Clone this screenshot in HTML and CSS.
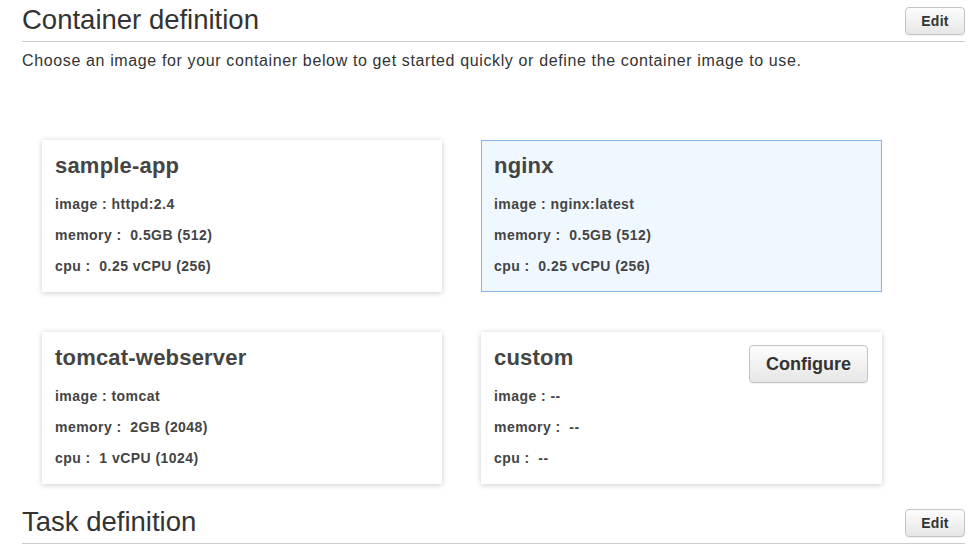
FILE: index.html
```html
<!DOCTYPE html>
<html lang="en">
<head>
<meta charset="utf-8">
<title>Container definition</title>
<link rel="stylesheet" href="styles.css">
</head>
<body>
<main class="page">
  <section class="section">
    <header class="section-header">
      <h2 class="section-title">Container definition</h2>
      <button class="btn btn-small" type="button">Edit</button>
    </header>
    <p class="section-desc">Choose an image for your container below to get started quickly or define the container image to use.</p>
    <div class="card-grid">
      <div class="card">
        <div class="card-head"><h3 class="card-title">sample-app</h3></div>
        <div class="card-line">image : httpd:2.4</div>
        <div class="card-line">memory :&nbsp; 0.5GB (512)</div>
        <div class="card-line">cpu :&nbsp; 0.25 vCPU (256)</div>
      </div>
      <div class="card card-selected">
        <div class="card-head"><h3 class="card-title">nginx</h3></div>
        <div class="card-line">image : nginx:latest</div>
        <div class="card-line">memory :&nbsp; 0.5GB (512)</div>
        <div class="card-line">cpu :&nbsp; 0.25 vCPU (256)</div>
      </div>
      <div class="card">
        <div class="card-head"><h3 class="card-title">tomcat-webserver</h3></div>
        <div class="card-line">image : tomcat</div>
        <div class="card-line">memory :&nbsp; 2GB (2048)</div>
        <div class="card-line">cpu :&nbsp; 1 vCPU (1024)</div>
      </div>
      <div class="card">
        <div class="card-head">
          <h3 class="card-title">custom</h3>
          <button class="btn btn-large" type="button">Configure</button>
        </div>
        <div class="card-line">image : --</div>
        <div class="card-line">memory :&nbsp; --</div>
        <div class="card-line">cpu :&nbsp; --</div>
      </div>
    </div>
  </section>
  <section class="section section-task">
    <header class="section-header">
      <h2 class="section-title">Task definition</h2>
      <button class="btn btn-small" type="button">Edit</button>
    </header>
  </section>
</main>
</body>
</html>
```

FILE: styles.css
```css
html, body {
  margin: 0;
  padding: 0;
  background: #ffffff;
}

body {
  font-family: "Liberation Sans", Arial, sans-serif;
  color: #333333;
}

.page {
  padding: 0 14px 0 22px;
}

.section-header {
  display: flex;
  justify-content: space-between;
  align-items: center;
  height: 41px;
  border-bottom: 1px solid #cccccc;
}

.section-title {
  margin: 0 0 2px;
  font-size: 27.5px;
  line-height: 39px;
  font-weight: normal;
  color: #333333;
  white-space: nowrap;
}

.section-desc {
  margin: 9px 0 0;
  font-size: 16px;
  line-height: 20px;
  letter-spacing: 0.63px;
  color: #333333;
}

.btn {
  font-family: "Liberation Sans", Arial, sans-serif;
  font-weight: bold;
  color: #333333;
  background: linear-gradient(#fdfdfd, #e6e6e6);
  border: 1px solid #c4c4c4;
  border-radius: 4px;
  cursor: pointer;
  box-shadow: 0 1px 1px rgba(0, 0, 0, 0.06);
}

.btn-small {
  width: 60px;
  height: 28px;
  font-size: 14px;
  letter-spacing: 0.3px;
  padding: 0;
}

.btn-large {
  width: 119px;
  height: 38px;
  font-size: 18px;
  padding: 0;
  margin-bottom: -12px;
  flex-shrink: 0;
}

.card-grid {
  display: grid;
  grid-template-columns: 400px 401px;
  column-gap: 39px;
  row-gap: 40px;
  margin: 69px 0 0 20px;
}

.card {
  box-sizing: border-box;
  height: 152px;
  padding: 12px 13px 11px 12px;
  background: #ffffff;
  border: 1px solid transparent;
  box-shadow: 0 1px 6px rgba(0, 0, 0, 0.2);
}

.card-selected {
  background: #f0f8ff;
  border-color: #86b4e2;
  box-shadow: none;
}

.card-head {
  display: flex;
  justify-content: space-between;
  align-items: flex-start;
  margin-bottom: 10px;
}

.card-title {
  margin: 0;
  font-size: 22px;
  line-height: 26px;
  letter-spacing: 0.2px;
  font-weight: bold;
  color: #444444;
}

.card-line {
  font-size: 14px;
  line-height: 31px;
  letter-spacing: 0.45px;
  font-weight: bold;
  color: #444444;
  white-space: nowrap;
}

.section-task {
  margin-top: 18px;
}
```
